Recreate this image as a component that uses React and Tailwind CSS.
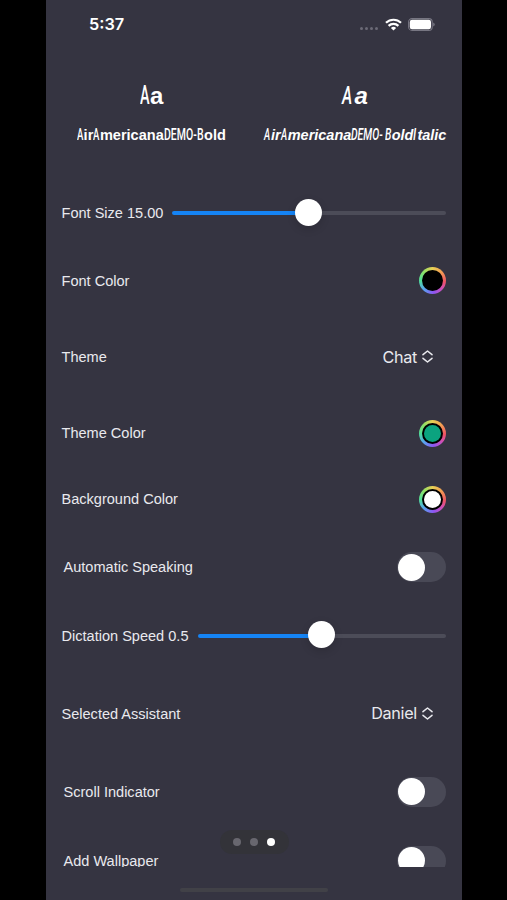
import React from "react";

// Condensed display capital: ordinary type squeezed into a narrow slot.
function Cap({ children, slot, squeeze }) {
  return (
    <span className={`inline-block ${slot}`}>
      <span className={`inline-block origin-[0_80%] font-["Roboto"] font-medium ${squeeze}`}>
        {children}
      </span>
    </span>
  );
}

function Row({ label, height, indent, children }) {
  return (
    <div className={`flex shrink-0 items-center justify-between pr-4 ${height} ${indent ? "pl-[17.5px]" : "pl-[15.5px]"}`}>
      <span className="whitespace-nowrap text-[14.55px] leading-5 text-[#e9e9ee]">{label}</span>
      {children}
    </div>
  );
}

function Slider({ width, fill }) {
  return (
    <div className={`flex h-7 items-center ${width}`}>
      <div className={`h-1 rounded-l-full bg-[#1584f5] ${fill}`} />
      <div className="relative -top-px -mx-px size-[27px] shrink-0 rounded-full bg-white shadow-[0_3px_8px_rgba(0,0,0,0.15)]" />
      <div className="h-1 flex-1 rounded-r-full bg-[#4c4c58]" />
    </div>
  );
}

function ColorWell({ color }) {
  return (
    <div className="flex size-[27px] items-center justify-center rounded-full bg-[conic-gradient(#e8cf55,#f3a052_45deg,#ee5264_95deg,#cf4fb5_130deg,#8c55f2_175deg,#57a5ee_225deg,#51df99_270deg,#8fe066_315deg,#e8cf55)]">
      <div className="flex size-[21px] items-center justify-center rounded-full bg-black">
        <div className={`size-[17px] rounded-full ${color}`} />
      </div>
    </div>
  );
}

function Toggle() {
  return (
    <div className="flex h-[30px] w-[49px] items-center rounded-full bg-[#494956] pl-px">
      <div className="size-[27px] rounded-full bg-white" />
    </div>
  );
}

function Menu({ value }) {
  return (
    <div className='flex items-center gap-[5px] pr-[13px] font-["Inter"] text-[16.2px] tracking-[-0.3px] text-[#e9e9ee]'>
      <span>{value}</span>
      <svg width="11" height="13" viewBox="0 0 11 13" fill="none" stroke="currentColor" strokeWidth="1.5" strokeLinecap="round" strokeLinejoin="round">
        <path d="M1 4.7 5.5 1 10 4.7M1 8.3 5.5 12 10 8.3" />
      </svg>
    </div>
  );
}

export default function App() {
  return (
    <div className='flex h-[900px] w-[507px] justify-center overflow-hidden bg-black pl-px font-["Liberation_Sans",sans-serif]'>
      <main className="flex w-[416px] flex-col overflow-hidden bg-[#353441]">
        <header className="flex h-[49px] shrink-0 items-center justify-between pl-[43px] pr-[27px]">
          <span className='font-["Inter"] text-[16.3px] font-semibold text-white'>5:37</span>
          <div className="flex items-center">
            <div className="mr-[7px] mt-2 flex gap-[2px]">
              <i className="size-[3px] rounded-full bg-[#6b6a76]" />
              <i className="size-[3px] rounded-full bg-[#6b6a76]" />
              <i className="size-[3px] rounded-full bg-[#6b6a76]" />
              <i className="size-[3px] rounded-full bg-[#6b6a76]" />
            </div>
            <svg className="mr-[6px]" width="17" height="13" viewBox="0 0 17 13" fill="none" stroke="white" strokeWidth="2.2">
              <path d="M1 4.8a10.8 10.8 0 0 1 15 0M3.6 7.9a7 7 0 0 1 9.8 0" />
              <path d="M8.5 12.6 5.9 10a3.8 3.8 0 0 1 5.2 0Z" fill="white" stroke="none" />
            </svg>
            <svg width="27" height="13" viewBox="0 0 27 13">
              <rect x=".6" y=".6" width="23.6" height="11.8" rx="3.4" fill="none" stroke="#777682" strokeWidth="1.1" />
              <rect x="1.8" y="1.8" width="21.2" height="9.4" rx="2.2" fill="white" />
              <path d="M25.2 4.6q1.5.5 1.5 1.9t-1.5 1.9Z" fill="#777682" />
            </svg>
          </div>
        </header>

        <section className="flex h-[130px] shrink-0 font-bold text-white">
          <div className="w-[180px] shrink-0 pl-[31px] pt-[32px]">
            <div className="h-[44px] whitespace-nowrap pl-[63px] text-[24px] leading-[30px]">
              <Cap slot="w-[10px]" squeeze="scale-x-[0.6] scale-y-[1.1]">A</Cap>a
            </div>
            <div className="whitespace-nowrap text-[14.55px] leading-5">
              <Cap slot="w-[6.6px]" squeeze="scale-x-[0.66] scale-y-[1.15]">A</Cap>ir
              <Cap slot="w-[6.6px]" squeeze="scale-x-[0.66] scale-y-[1.15]">A</Cap>mericana
              <Cap slot="w-[33.3px]" squeeze="scale-x-[0.72] scale-y-[1.15]">DEMO-</Cap>
              <Cap slot="w-[7px]" squeeze="scale-x-[0.72] scale-y-[1.15]">B</Cap>old
            </div>
          </div>
          <div className="flex-1 pl-[38px] pt-[32px] italic">
            <div className="h-[44px] whitespace-nowrap pl-[78px] text-[24px] leading-[30px]">
              <Cap slot="w-[12.5px]" squeeze="scale-x-[0.66] scale-y-[1.1]">A</Cap>a
            </div>
            <div className="whitespace-nowrap text-[14.5px] leading-5">
              <Cap slot="w-[7px]" squeeze="scale-x-[0.66] scale-y-[1.15]">A</Cap>ir
              <Cap slot="w-[7px]" squeeze="scale-x-[0.66] scale-y-[1.15]">A</Cap>mericana
              <Cap slot="w-[33.3px]" squeeze="scale-x-[0.72] scale-y-[1.15]">DEMO-</Cap>
              <Cap slot="w-[7px]" squeeze="scale-x-[0.72] scale-y-[1.15]">B</Cap>old
              <Cap slot="w-[4px]" squeeze="scale-x-[0.8] scale-y-[1.15]">I</Cap>talic
            </div>
          </div>
        </section>

        <section className="flex h-[688px] shrink-0 flex-col overflow-hidden">
          <Row label="Font Size 15.00" height="h-[68px]">
            <Slider width="w-[274px]" fill="w-[124px]" />
          </Row>
          <Row label="Font Color" height="h-[67px]">
            <ColorWell color="bg-black" />
          </Row>
          <Row label="Theme" height="h-[86px]">
            <Menu value="Chat" />
          </Row>
          <Row label="Theme Color" height="h-[66px]">
            <ColorWell color="bg-[#0ba37f]" />
          </Row>
          <Row label="Background Color" height="h-[66px]">
            <ColorWell color="bg-white" />
          </Row>
          <Row label="Automatic Speaking" height="h-[70px]" indent>
            <Toggle />
          </Row>
          <Row label="Dictation Speed 0.5" height="h-[67px]">
            <Slider width="w-[248px]" fill="w-[111px]" />
          </Row>
          <Row label="Selected Assistant" height="h-[89px]">
            <Menu value="Daniel" />
          </Row>
          <Row label="Scroll Indicator" height="h-[67px]" indent>
            <Toggle />
          </Row>
          <Row label="Add Wallpaper" height="h-[71px]" indent>
            <Toggle />
          </Row>
        </section>

        <footer className="relative flex h-[33px] shrink-0 items-center justify-center pt-[13px]">
          <div className="absolute -top-[37px] left-[173.5px] flex h-6 w-[69px] items-center justify-center gap-[9.3px] rounded-full bg-[#333339]">
            <i className="size-2 rounded-full bg-[#68676f]" />
            <i className="size-2 rounded-full bg-[#68676f]" />
            <i className="size-2 rounded-full bg-white" />
          </div>
          <div className="h-1 w-[148px] rounded-full bg-[#414147]" />
        </footer>
      </main>
    </div>
  );
}
